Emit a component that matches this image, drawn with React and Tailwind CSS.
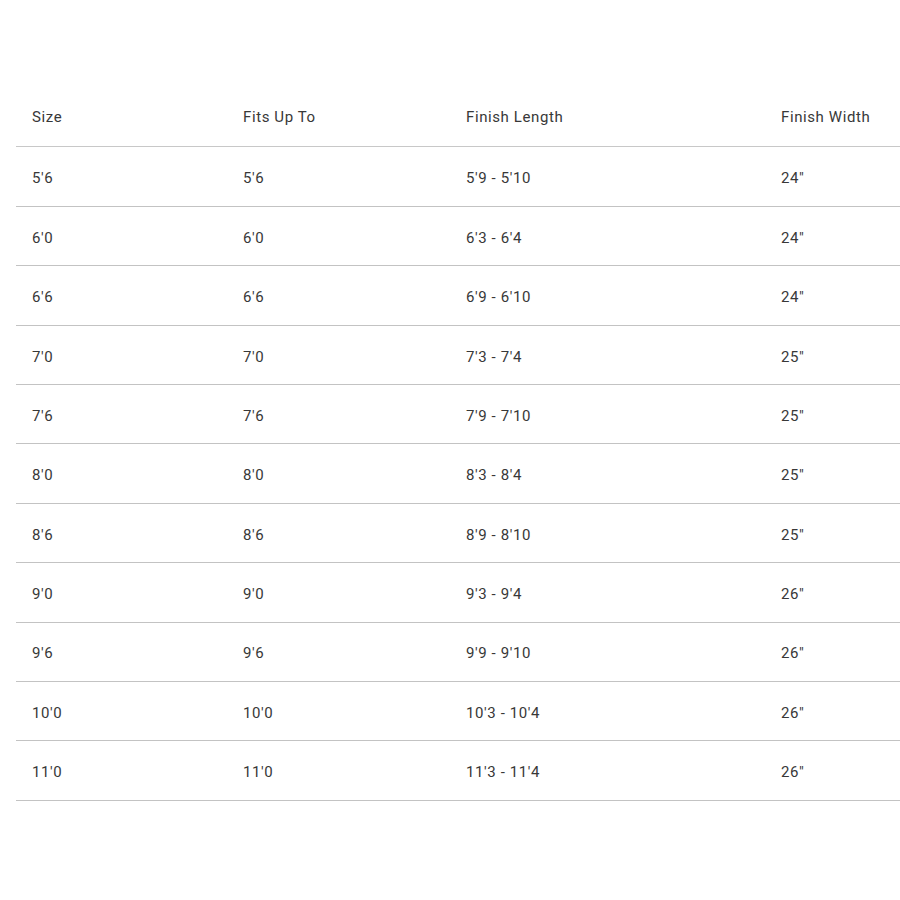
import React from "react";

const rows = [
  ["5'6", "5'6", "5'9 - 5'10", "24\""],
  ["6'0", "6'0", "6'3 - 6'4", "24\""],
  ["6'6", "6'6", "6'9 - 6'10", "24\""],
  ["7'0", "7'0", "7'3 - 7'4", "25\""],
  ["7'6", "7'6", "7'9 - 7'10", "25\""],
  ["8'0", "8'0", "8'3 - 8'4", "25\""],
  ["8'6", "8'6", "8'9 - 8'10", "25\""],
  ["9'0", "9'0", "9'3 - 9'4", "26\""],
  ["9'6", "9'6", "9'9 - 9'10", "26\""],
  ["10'0", "10'0", "10'3 - 10'4", "26\""],
  ["11'0", "11'0", "11'3 - 11'4", "26\""],
];

const cols = "grid grid-cols-[211px_223px_315px_135px]";

export default function App() {
  return (
    <div className="w-[900px] h-[900px] bg-white pt-[88px] pl-4 text-[#383838] text-[15px] tracking-[0.6px]" style={{ fontFamily: "Roboto, 'Liberation Sans', sans-serif" }}>
      <div className={`${cols} h-[59.4px] items-center border-b border-[#c8c8c8] pt-[1px]`}>
        <div className="pl-4">Size</div>
        <div className="pl-4">Fits Up To</div>
        <div className="pl-4">Finish Length</div>
        <div className="pl-4">Finish Width</div>
      </div>
      {rows.map((r, i) => (
        <div key={i} className={`${cols} h-[59.4px] items-center border-b border-[#c3c3c3] pt-[4px]`}>
          {r.map((c, j) => (
            <div key={j} className="pl-4">{c}</div>
          ))}
        </div>
      ))}
    </div>
  );
}
